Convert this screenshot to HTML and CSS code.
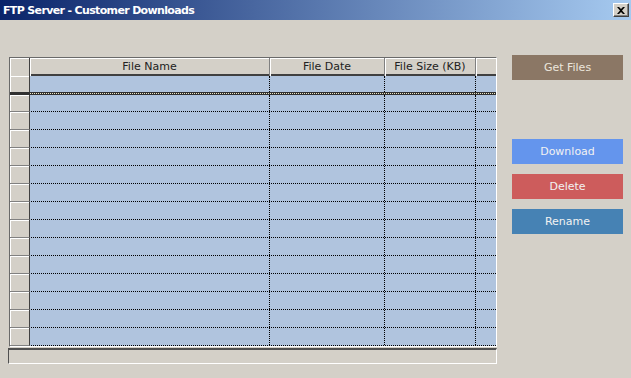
FILE: index.html
```html
<!DOCTYPE html>
<html lang="en">
<head>
    <meta charset="UTF-8">
    <title>FTP Server - Customer Downloads</title>
    <link rel="stylesheet" href="styles.css">
</head>
<body>
    <div class="window">
        <div class="titlebar">
            <span class="title">FTP Server - Customer Downloads</span>
            <button class="close-btn">
                <svg width="8" height="7" viewBox="0 0 8 7">
                    <path d="M0 0h2l2 2 2-2h2L5 3.5 8 7H6L4 5 2 7H0l3-3.5z" fill="#000"/>
                </svg>
            </button>
        </div>

        <div class="window-body">
            <div class="grid-wrap">
                <div class="grid" id="grid">
                    <div class="row header-row">
                        <div class="rh"></div>
                        <div class="hc">File Name</div>
                        <div class="hc">File Date</div>
                        <div class="hc">File Size (KB)</div>
                        <div class="hc last"></div>
                    </div>
                    <div class="row first-row">
                        <div class="rh"></div><div class="c"></div><div class="c"></div><div class="c"></div><div class="c last"></div>
                    </div>
                    <div class="row sep-row">
                        <div class="sep-rh"></div><div class="sep"></div>
                    </div>
                </div>
                <div class="hscroll"></div>
            </div>

            <div class="actions">
                <button class="action-btn get-files">Get Files</button>
                <button class="action-btn download">Download</button>
                <button class="action-btn delete">Delete</button>
                <button class="action-btn rename">Rename</button>
            </div>
        </div>
    </div>

    <script>
        const grid = document.getElementById('grid');

        // 14 empty data rows below the new-row separator
        for (let i = 0; i < 14; i++) {
            const row = document.createElement('div');
            row.className = 'row data-row';
            row.innerHTML = '<div class="rh"></div><div class="c"></div><div class="c"></div><div class="c"></div><div class="c last"></div>';
            grid.appendChild(row);
        }
    </script>
</body>
</html>
```

FILE: styles.css
```css
body {
    margin: 0;
    background-color: #d4d0c8;
    font-family: 'DejaVu Sans', Tahoma, sans-serif;
    font-size: 11px;
}

.window {
    width: 631px;
    height: 378px;
    background-color: #d4d0c8;
    overflow: hidden;
}

.titlebar {
    height: 20px;
    display: flex;
    align-items: center;
    justify-content: space-between;
    background: linear-gradient(to right, #0a246a, #a6caf0);
}

.title {
    color: #fff;
    font-weight: bold;
    font-size: 11px;
    letter-spacing: -0.65px;
    padding-left: 3px;
}

.close-btn {
    width: 16px;
    height: 14px;
    margin-right: 2px;
    padding: 0;
    display: flex;
    align-items: center;
    justify-content: center;
    background-color: #d4d0c8;
    border: 1px solid;
    border-color: #fff #404040 #404040 #fff;
    box-shadow: inset -1px -1px 0 #808080;
}

.window-body {
    display: flex;
    align-items: flex-start;
    padding-top: 37px;
}

.grid-wrap {
    margin-left: 8px;
    display: flex;
    flex-direction: column;
}

.grid {
    margin-left: 1px;
    width: 486px;
    border: 1px solid;
    border-color: #6a6a6a #fff #fff #6a6a6a;
    background-color: #b0c4de;
}

.row {
    display: grid;
    grid-template-columns: 20px 240px 115px 91px 20px;
}

.rh {
    background-color: #d4d0c8;
    border-right: 1px solid #404040;
    box-shadow: inset 1px 1px 0 #fff;
}

.header-row {
    height: 18px;
    border-bottom: 2px solid #404040;
    box-sizing: border-box;
    background-color: #d4d0c8;
}

.hc {
    text-align: center;
    line-height: 18px;
    color: #222;
    border-right: 1px solid #808080;
    box-shadow: inset 1px 1px 0 #fff;
}

.hc.last {
    border-right: none;
}

.first-row {
    height: 16px;
}

.c {
    border-right: 1px dotted #000;
}

.c.last {
    border-right: none;
}

.sep-row {
    height: 3px;
    grid-template-columns: 20px 466px;
}

.sep-rh {
    background-color: #303030;
}

.sep {
    background:
        linear-gradient(#303030 0 1px, transparent 1px 2px, #303030 2px 3px),
        repeating-linear-gradient(90deg, #efe9c4 0 1px, #303030 1px 2px);
}

.data-row {
    height: 18px;
    box-sizing: border-box;
    border-bottom: 1px dotted #000;
}

.sep-row + .data-row {
    height: 17px;
}

.data-row .rh {
    border-bottom: 1px solid #808080;
    margin-bottom: -1px;
}

.hscroll {
    margin-top: 1px;
    width: 487px;
    height: 13px;
    border: 1px solid;
    border-top-width: 2px;
    border-color: #505050 #fff #fff #505050;
}

.actions {
    margin-left: 15px;
    margin-top: -2px;
    display: flex;
    flex-direction: column;
}

.action-btn {
    width: 111px;
    height: 25px;
    border: none;
    padding: 0;
    color: #f2f2f2;
    font-family: 'DejaVu Sans', Tahoma, sans-serif;
    font-size: 11px;
}

.get-files {
    background-color: #8b7765;
    color: #ece6dc;
    margin-bottom: 59px;
}

.download {
    background-color: #6495ed;
    margin-bottom: 10px;
}

.delete {
    background-color: #cd5c5c;
    margin-bottom: 10px;
}

.rename {
    background-color: #4682b4;
}
```
